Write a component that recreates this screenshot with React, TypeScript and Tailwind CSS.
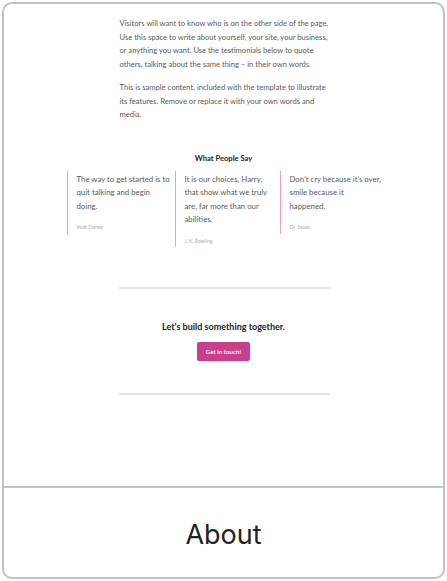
export default function App() {
  const quotes = [
    {
      lines: ["The way to get started is to", "quit talking and begin", "doing."],
      by: "Walt Disney",
      w: "w-[108px]",
    },
    {
      lines: ["It is our choices, Harry,", "that show what we truly", "are, far more than our", "abilities."],
      by: "J. K. Rowling",
      w: "w-[105px]",
    },
    {
      lines: ["Don’t cry because it’s over,", "smile because it", "happened."],
      by: "Dr. Seuss",
      w: "w-[100px]",
    },
  ];

  return (
    <div
      className="w-[447px] h-[581px] bg-white p-[2px]"
      style={{ fontFamily: "Lato, 'Noto Sans', sans-serif" }}
    >
      <div className="h-[577px] border-2 border-[#bcc3cb] rounded-[10px] flex flex-col overflow-hidden">
        {/* page preview */}
        <div className="h-[484px] flex flex-col items-center border-b-2 border-[#bcc3cb]">
          <div className="w-[212px] pt-[13px] text-[7.6px] leading-[13.5px] text-[#5a5a5a] whitespace-nowrap ml-[4px]">
            <p>
              <span className="block">Visitors will want to know who is on the other side of the page.</span>
              <span className="block">Use this space to write about yourself, your site, your business,</span>
              <span className="block">or anything you want. Use the testimonials below to quote</span>
              <span className="block">others, talking about the same thing – in their own words.</span>
            </p>
            <p className="mt-[10px]">
              <span className="block">This is sample content, included with the template to illustrate</span>
              <span className="block">its features. Remove or replace it with your own words and</span>
              <span className="block">media.</span>
            </p>
          </div>

          <h3 className="mt-[31px] text-[7.6px] font-bold text-[#222]">
            What People Say
          </h3>

          <div className="mt-[7px] w-[313px] flex self-start ml-[63px]">
            {quotes.map((q) => (
              <div key={q.by} className={`${q.w} shrink-0 self-start`}>
                <div className="w-fit border-l-[1.5px] border-[#ef9cc6] pl-[8.5px] pt-[2px] pb-[2px] pr-[2px]">
                  <p className="text-[7.8px] leading-[13.5px] text-[#5a5a5a] whitespace-nowrap">
                    {q.lines.map((l) => (
                      <span key={l} className="block">
                        {l}
                      </span>
                    ))}
                  </p>
                  <p className="mt-[11px] text-[5px] text-[#aaa]">{q.by}</p>
                </div>
              </div>
            ))}
          </div>

          <div className="mt-[40px] w-[211px] h-[2px] bg-[#e4e4e4] ml-[1px]" />

          <h3 className="mt-[31px] text-[9px] font-bold text-[#222]">
            Let’s build something together.
          </h3>
          <button className="mt-[8px] h-[19px] px-[9px] rounded-[2px] bg-[#c93f8c] text-white text-[6.2px] font-semibold">
            Get in touch!
          </button>

          <div className="mt-[32px] w-[211px] h-[2px] bg-[#e4e4e4] ml-[1px]" />
        </div>

        {/* title */}
        <div className="flex-1 flex items-center justify-center pt-[6px]">
          <span
            className="text-[27px] text-[#222]"
            style={{ fontFamily: "Inter, 'Liberation Sans', sans-serif" }}
          >
            About
          </span>
        </div>
      </div>
    </div>
  );
}
